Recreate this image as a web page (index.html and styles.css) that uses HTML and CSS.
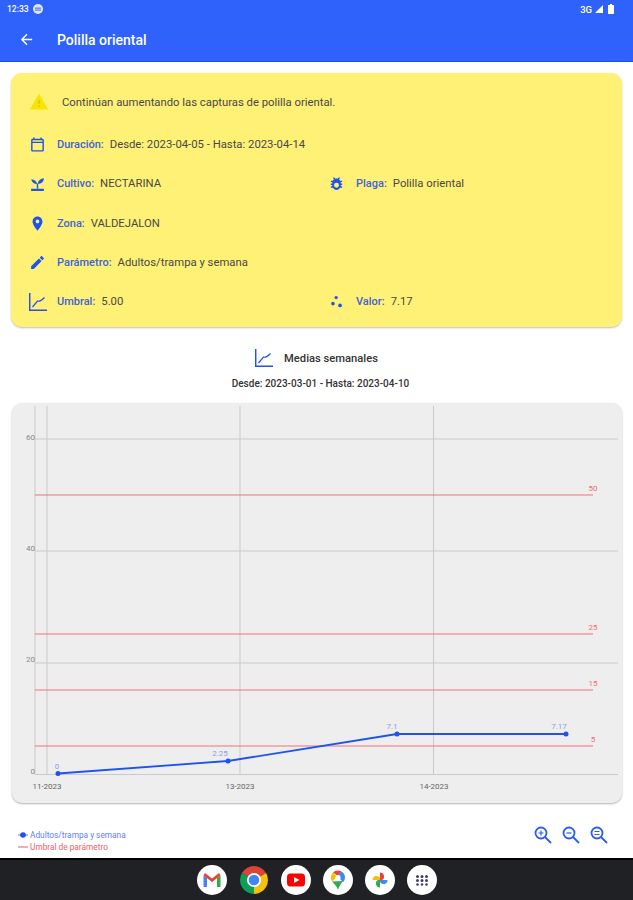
FILE: index.html
```html
<!DOCTYPE html>
<html lang="es">
<head>
<meta charset="utf-8">
<title>Polilla oriental</title>
<link rel="stylesheet" href="styles.css">
</head>
<body>
<div class="screen">
  <header class="appbar">
    <div class="status">
      <div class="status-left">
        <span>12:33</span>
        <svg class="st-ico" viewBox="0 0 10 10"><circle cx="5" cy="5" r="5" fill="#dfe6ff"/><rect x="2" y="3.6" width="6" height="1" fill="#2f62f9"/><rect x="2" y="5.6" width="6" height="1" fill="#2f62f9"/></svg>
      </div>
      <div class="status-right">
        <span>3G</span>
        <svg class="st-sig" viewBox="0 0 8 8"><path d="M8 0v8H0z" fill="#fff"/></svg>
        <svg class="st-bat" viewBox="0 0 6 10"><path d="M2 0h2v1h1.500a.5.5 0 0 1 .5.5V10H0V1.500a.5.5 0 0 1 .5-.5H2z" fill="#fff"/></svg>
      </div>
    </div>
    <div class="toolbar">
      <svg class="back" viewBox="0 0 24 24"><path d="M20 11H7.830l5.590-5.590L12 4l-8 8 8 8 1.410-1.410L7.830 13H20v-2z" fill="#fff"/></svg>
      <h1 class="title">Polilla oriental</h1>
    </div>
  </header>

  <main class="content">
    <section class="alert-card">
      <div class="alert">
        <svg class="warn" viewBox="0 0 24 24"><path d="M1 21h22L12 2 1 21z" fill="#f6e500"/><path d="M13 18h-2v-2h2v2zm0-4h-2v-4h2v4z" fill="#d9c800"/></svg>
        <span class="txt">Continúan aumentando las capturas de polilla oriental.</span>
      </div>
      <div class="rows">
        <div class="row wide">
          <span class="ico"><svg viewBox="0 0 24 24"><path d="M19 4h-1V2h-2v2H8V2H6v2H5c-1.100 0-2 .9-2 2v14c0 1.100.9 2 2 2h14c1.100 0 2-.9 2-2V6c0-1.100-.9-2-2-2zm0 16H5V10h14v10zm0-12H5V6h14v2z"/></svg></span>
          <span class="lbl">Duración:</span><span class="txt">Desde: 2023-04-05 - Hasta: 2023-04-14</span>
        </div>
        <div class="row">
          <span class="ico"><svg viewBox="0 0 24 24"><path d="M11 19v-7h2v7zM3 19.500h18V22.500H3zM11.500 13C7.500 13 4.500 11 3 6.500c4-.5 7.500 1.500 8.500 6.500zM12.500 12.500c.3-5 4-7.500 8.500-8 0 5-3.500 8-8.500 8z"/></svg></span>
          <span class="lbl">Cultivo:</span><span class="txt">NECTARINA</span>
        </div>
        <div class="row">
          <span class="ico"><svg viewBox="0 0 24 24"><path fill-rule="evenodd" d="M20 8h-2.810c-.45-.78-1.070-1.450-1.820-1.960L17 4.410 15.590 3l-2.170 2.170C12.960 5.060 12.490 5 12 5s-.96.06-1.410.17L8.410 3 7 4.410l1.620 1.630C7.880 6.550 7.260 7.220 6.810 8H4v2h2.090c-.05.33-.09.66-.09 1v1H4v2h2v1c0 .34.04.67.09 1H4v2h2.810c1.040 1.790 2.970 3 5.190 3s4.150-1.210 5.190-3H20v-2h-2.090c.05-.33.09-.66.09-1v-1h2v-2h-2v-1c0-.34-.04-.67-.09-1H20V8zM12 11a3.500 3.500 0 1 1 0 7 3.500 3.500 0 0 1 0-7z"/></svg></span>
          <span class="lbl">Plaga:</span><span class="txt">Polilla oriental</span>
        </div>
        <div class="row wide">
          <span class="ico"><svg viewBox="0 0 24 24"><path d="M12 2C8.130 2 5 5.130 5 9c0 5.250 7 13 7 13s7-7.750 7-13c0-3.870-3.130-7-7-7zm0 9.500c-1.380 0-2.500-1.120-2.500-2.500s1.120-2.500 2.500-2.500 2.500 1.120 2.500 2.500-1.120 2.500-2.500 2.500z"/></svg></span>
          <span class="lbl">Zona:</span><span class="txt">VALDEJALON</span>
        </div>
        <div class="row wide">
          <span class="ico"><svg viewBox="0 0 24 24"><path d="M3 17.250V21h3.750L17.810 9.940l-3.750-3.750L3 17.250zM20.710 7.040c.39-.39.39-1.020 0-1.410l-2.340-2.340c-.39-.39-1.020-.39-1.410 0l-1.830 1.830 3.750 3.750 1.830-1.830z"/></svg></span>
          <span class="lbl">Parámetro:</span><span class="txt">Adultos/trampa y semana</span>
        </div>
        <div class="row">
          <span class="ico"><svg class="big" viewBox="0 0 18 18"><path d="M.7 0v17.300H18" class="ln"/><path d="M3.500 14 8.500 8c2 1 4-.5 7-3.500" class="ln thin"/></svg></span>
          <span class="lbl">Umbral:</span><span class="txt">5.00</span>
        </div>
        <div class="row">
          <span class="ico"><svg viewBox="0 0 24 24"><circle cx="11.500" cy="6.500" r="2.300"/><circle cx="7" cy="15" r="2.500"/><circle cx="17" cy="17.500" r="2.600"/></svg></span>
          <span class="lbl">Valor:</span><span class="txt">7.17</span>
        </div>
      </div>
    </section>

    <div class="chart-head">
      <svg class="head-ico" viewBox="0 0 18 18"><path d="M.7 0v17.300H18" class="ln"/><path d="M3.500 14 8.500 8c2 1 4-.5 7-3.500" class="ln thin"/></svg>
      <span>Medias semanales</span>
    </div>
    <p class="chart-range">Desde: 2023-03-01 - Hasta: 2023-04-10</p>

    <section class="chart-card">
      <svg class="chart" viewBox="12 403 610 400">
        <g class="grid">
          <path d="M35 406V775M47 406V775M240 406V775M433.500 406V775"/>
          <path d="M35 439H618M35 551H618M35 663H618M35 774.500H618"/>
        </g>
        <g class="red">
          <path d="M35 495H593M35 634H593M35 690H593M35 746H593"/>
        </g>
        <g class="ylab">
          <text x="35" y="440">60</text>
          <text x="35" y="551">40</text>
          <text x="35" y="662">20</text>
          <text x="35" y="774">0</text>
        </g>
        <g class="xlab">
          <text x="47" y="789">11-2023</text>
          <text x="240" y="789">13-2023</text>
          <text x="434" y="789">14-2023</text>
        </g>
        <g class="rlab">
          <text x="593" y="491">50</text>
          <text x="593" y="630">25</text>
          <text x="593" y="686">15</text>
          <text x="593" y="742">5</text>
        </g>
        <path class="series" d="M58 773.500 228 761 397 734 566 734"/>
        <g class="dots">
          <circle cx="58" cy="773.500" r="2.500"/><circle cx="228" cy="761" r="2.500"/><circle cx="397" cy="734" r="2.500"/><circle cx="566" cy="734" r="2.500"/>
        </g>
        <g class="blab">
          <text x="57" y="769">0</text>
          <text x="220" y="756">2.25</text>
          <text x="392" y="729">7.1</text>
          <text x="559" y="729">7.17</text>
        </g>
      </svg>
    </section>

    <div class="chart-foot">
      <div class="legend">
        <div class="leg-item blue">
          <svg class="leg-mark" viewBox="0 0 10 6"><circle cx="5" cy="3" r="2.800" fill="#1f52f0"/><path d="M0 3h10" stroke="#1f52f0" stroke-width=".8"/></svg>
          <span>Adultos/trampa y semana</span>
        </div>
        <div class="leg-item pink">
          <svg class="leg-mark" viewBox="0 0 10 6"><path d="M0 3h10" stroke="#ee5a68" stroke-width="1"/></svg>
          <span>Umbral de parámetro</span>
        </div>
      </div>
      <div class="zooms">
        <svg class="zoom" viewBox="0 0 18 18"><circle cx="7" cy="7" r="5.500"/><path d="M11 11l6 6"/><path class="in" d="M4.500 7h5M7 4.500v5"/></svg>
        <svg class="zoom" viewBox="0 0 18 18"><circle cx="7" cy="7" r="5.500"/><path d="M11 11l6 6"/><path class="in" d="M4.500 7h5"/></svg>
        <svg class="zoom" viewBox="0 0 18 18"><circle cx="7" cy="7" r="5.500"/><path d="M11 11l6 6"/><path class="in" d="M4.500 5.500h5M4.500 8.500h5"/></svg>
      </div>
    </div>
  </main>

  <nav class="dock">
    <span class="app">
      <svg viewBox="0 0 30 30"><path d="M6.500 22V10.500l3.500 2.500v9z" fill="#4285f4"/><path d="M23.500 22V10.500L20 13v9z" fill="#34a853"/><path d="M6.500 10.500 15 17l8.500-6.500-1.500-2.500-7 5.500L8 8z" fill="#ea4335"/></svg>
    </span>
    <span class="app chrome">
      <svg viewBox="0 0 30 30"><path d="M15 15 2.900 8A14 14 0 0 1 27.100 8z" fill="#db4437"/><path d="M15 15 27.100 8A14 14 0 0 1 15 29z" fill="#f4c20d"/><path d="M15 15V29A14 14 0 0 1 2.900 8z" fill="#0f9d58"/><circle cx="15" cy="15" r="7" fill="#fff"/><circle cx="15" cy="15" r="5.300" fill="#4285f4"/></svg>
    </span>
    <span class="app">
      <svg viewBox="0 0 30 30"><rect x="6" y="8.500" width="18" height="13" rx="3.500" fill="#f00"/><path d="M13 12l5.500 3-5.500 3z" fill="#fff"/></svg>
    </span>
    <span class="app">
      <svg viewBox="0 0 30 30"><path d="M15 5.500a7 7 0 0 1 7 7c0 2-1 3.500-2 4.800l-5.500-6.300 3-3.800a4 4 0 0 0-2.500-1.700z" fill="#4285f4"/><path d="M10 7.500A7 7 0 0 1 18 6.500l-3 4.500z" fill="#ea4335"/><path d="M8 12.500c0-2 .8-3.800 2-5l4 4.500-5 4.500c-.7-1.200-1-2.600-1-4z" fill="#fbbc04"/><path d="M9 16.500l11-0.500c-2 3-4 5-5 9-1-4-4-6-6-8.500z" fill="#34a853"/><circle cx="15" cy="12.500" r="2.600" fill="#fff"/></svg>
    </span>
    <span class="app">
      <svg viewBox="0 0 30 30"><path d="M15 15H7.500a4 4 0 0 1 7.500-2z" fill="#fbbc04"/><path d="M15 15V7.500a4 4 0 0 1 2 7.500z" fill="#ea4335"/><path d="M15 15h7.500a4 4 0 0 1-7.500 2z" fill="#4285f4"/><path d="M15 15v7.500a4 4 0 0 1-2-7.500z" fill="#34a853"/></svg>
    </span>
    <span class="app">
      <svg viewBox="0 0 30 30" fill="#3c4070"><circle cx="10.500" cy="11.500" r="1.500"/><circle cx="15" cy="11.500" r="1.500"/><circle cx="19.500" cy="11.500" r="1.500"/><circle cx="10.500" cy="15.500" r="1.500"/><circle cx="15" cy="15.500" r="1.500"/><circle cx="19.500" cy="15.500" r="1.500"/><circle cx="10.500" cy="19.500" r="1.300"/><circle cx="15" cy="19.500" r="1.300"/><circle cx="19.500" cy="19.500" r="1.300"/></svg>
    </span>
  </nav>
</div>
</body>
</html>
```
FILE: styles.css
```css
* { box-sizing: border-box; }
html, body { margin: 0; padding: 0; }
body { font-family: Roboto, "Liberation Sans", sans-serif; background: #fff; color: #333; }

.screen { width: 633px; height: 900px; display: flex; flex-direction: column; overflow: hidden; }

.appbar { height: 62px; background: #2f62fb; border-bottom: 1px solid #1a4fe8; color: #fff; flex: none; }
.status { height: 18px; padding: 0 19px 0 7px; display: flex; justify-content: space-between; align-items: center; font-size: 8.500px; font-weight: 500; }
.status-left, .status-right { display: flex; align-items: center; gap: 3px; }
.status-left { gap: 4px; }
.status-right { font-size: 9.500px; }
.st-ico { width: 10px; height: 10px; }
.st-sig { width: 8px; height: 8px; }
.st-bat { width: 6px; height: 10px; margin-left: 2px; }
.toolbar { height: 43px; display: flex; align-items: center; padding-left: 18px; }
.back { width: 17px; height: 17px; margin-right: 22px; }
.title { margin: 0; font-size: 14px; font-weight: 500; color: #fff; }

.content { flex: 1; padding: 11px 11px 0; display: flex; flex-direction: column; min-height: 0; }

.alert-card { height: 254px; background: #fff176; border-radius: 11px; box-shadow: 0 1px 2px rgba(0,0,0,.25); padding: 8px 0 0 17px; flex: none; }
.alert { height: 43px; display: flex; align-items: center; padding-left: 1px; gap: 13px; margin-bottom: 1px; }
.warn { width: 20px; height: 20px; margin-top: -2px; }
.rows { display: grid; grid-template-columns: 299px 1fr; grid-auto-rows: 39.3px; }
.row { display: flex; align-items: center; font-size: 11px; }
.row.wide { grid-column: 1 / -1; }
.ico { width: 19px; height: 19px; display: flex; align-items: center; justify-content: center; margin-right: 10px; flex: none; }
.ico svg { width: 17px; height: 17px; fill: #1f52f0; }
.ico svg.big { width: 18px; height: 18px; fill: none; }
.lbl { font-weight: 500; color: #3d63d8; margin-right: 6px; }
.txt { font-size: 11.300px; color: #484848; }
.ln { fill: none; stroke: #1f52f0; stroke-width: 1.500; }
.ln.thin { stroke-width: 1.200; }

.chart-head { height: 24px; margin-top: 19px; display: flex; align-items: center; justify-content: center; gap: 11px; font-size: 11.200px; font-weight: 500; color: #333; flex: none; }
.head-ico { width: 18px; height: 18px; }
.chart-range { margin: 0; height: 23px; padding: 8px 0 0 8px; text-align: center; font-size: 10px; font-weight: 500; color: #333; flex: none; }

.chart-card { width: 610px; height: 400px; margin: 10px 0 0 1px; background: #eee; border-radius: 10px; box-shadow: 0 1px 2px rgba(0,0,0,.3); flex: none; overflow: hidden; }
.chart { display: block; width: 610px; height: 400px; }
.grid path { fill: none; stroke: #c9c9c9; stroke-width: 1; }
.red path { fill: none; stroke: #f0707c; stroke-width: 1.200; }
.series { fill: none; stroke: #1f52f0; stroke-width: 1.800; }
.dots circle { fill: #1f52f0; }
.ylab text, .xlab text, .rlab text, .blab text { font-size: 8px; font-family: Roboto, sans-serif; }
.ylab text { text-anchor: end; fill: #888; }
.xlab text { text-anchor: middle; fill: #666; }
.rlab text { text-anchor: middle; fill: #ee6a76; }
.blab text { text-anchor: middle; fill: #8c9df0; }

.chart-foot { flex: 1; display: flex; justify-content: space-between; align-items: flex-start; padding: 23px 14px 0 7px; }
.legend { display: flex; flex-direction: column; gap: 2px; padding-top: 4px; font-size: 8.300px; }
.leg-item { height: 10px; display: flex; align-items: center; gap: 2px; }
.leg-mark { width: 10px; height: 6px; }
.blue { color: #5f7ff5; }
.pink { color: #f0606e; }
.zooms { display: flex; gap: 10px; }
.zoom { width: 18px; height: 18px; }
.zoom circle, .zoom path { fill: none; stroke: #2a5cf0; stroke-width: 1.800; }
.zoom path.in { stroke-width: 1.200; }

.dock { height: 42px; background: #202124; border-top: 2px solid #000; display: flex; align-items: center; justify-content: center; gap: 12px; flex: none; }
.app { width: 30px; height: 30px; border-radius: 50%; background: #fff; display: block; }
.app svg { display: block; width: 30px; height: 30px; }
.app.chrome { background: transparent; }
```
